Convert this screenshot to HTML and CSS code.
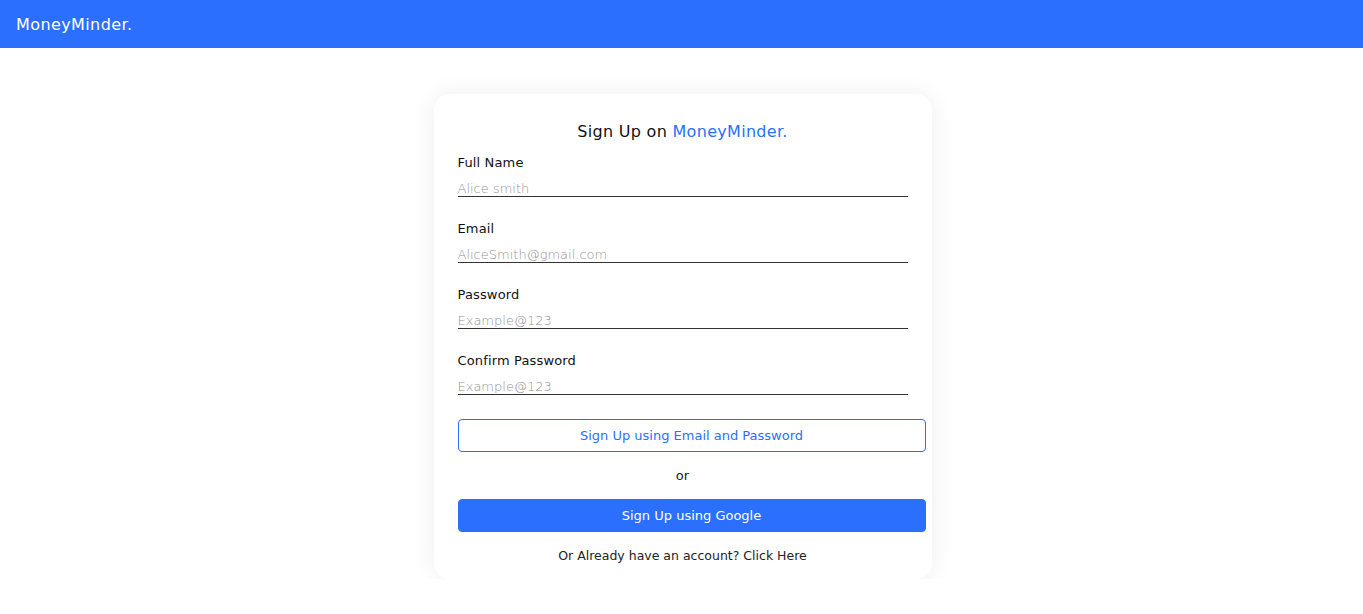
FILE: index.html
```html
<!DOCTYPE html>
<html>
<head>
<meta charset="utf-8">
<link rel="stylesheet" href="styles.css">
</head>
<body>
<header class="navbar"><span class="brand">MoneyMinder.</span></header>
<main class="page">
  <form class="card">
    <h1 class="title">Sign Up on <span class="accent">MoneyMinder.</span></h1>
    <div class="field">
      <label class="label">Full Name</label>
      <input class="input" type="text" placeholder="Alice smith">
    </div>
    <div class="field">
      <label class="label">Email</label>
      <input class="input" type="email" placeholder="AliceSmith@gmail.com">
    </div>
    <div class="field">
      <label class="label">Password</label>
      <input class="input" type="password" placeholder="Example@123">
    </div>
    <div class="field">
      <label class="label">Confirm Password</label>
      <input class="input" type="password" placeholder="Example@123">
    </div>
    <button type="button" class="btn btn-outline">Sign Up using Email and Password</button>
    <p class="or">or</p>
    <button type="button" class="btn btn-solid">Sign Up using Google</button>
    <p class="footer">Or Already have an account? Click Here</p>
  </form>
</main>
</body>
</html>
```
FILE: styles.css
```css
* { box-sizing: border-box; }
html, body { margin: 0; padding: 0; background: #fff; }
body { font-family: "DejaVu Sans", "Open Sans", sans-serif; color: #111; }
.navbar {
  height: 48px;
  background: #2b6fff;
  display: flex;
  align-items: center;
  padding-left: 16px;
}
.brand { color: #fff; font-size: 16px; font-weight: 500; letter-spacing: 0.4px; }
.page { display: flex; justify-content: center; padding-top: 46px; padding-left: 2px; }
.card {
  width: 498px;
  background: #fff;
  border-radius: 16px;
  box-shadow: 0 0 24px rgba(0,0,0,0.07);
  padding: 24px 24px 14px;
  display: flex;
  flex-direction: column;
}
.title { margin: 0 0 8px; font-size: 16px; letter-spacing: 0.3px; font-weight: 400; text-align: center; color: #111; line-height: 28px; }
.accent { color: #2b6fff; }
.field { display: flex; flex-direction: column; margin-bottom: 23px; }
.label { font-size: 13px; letter-spacing: 0.15px; line-height: 18px; margin-bottom: 8px; color: #111; }
.input {
  width: 450px;
  border: none;
  border-bottom: 1px solid #333;
  padding: 0;
  height: 17px;
  font-family: inherit;
  font-size: 13px;
  font-weight: 300;
  outline: none;
  background: transparent;
}
.input::placeholder { color: #939393; }
.btn {
  width: 468px;
  height: 33px;
  border-radius: 4px;
  font-family: inherit;
  font-size: 13px;
  cursor: pointer;
}
.btn-outline { margin-top: 1px; background: #fff; color: #2b6fff; border: 1px solid #2b6fff; }
.btn-solid { background: #2b6fff; color: #fff; border: 1px solid #2b6fff; }
.or { margin: 0; height: 47px; display: flex; align-items: center; justify-content: center; font-size: 13px; color: #222; }
.footer { margin: 15px 0 0; text-align: center; font-size: 12.5px; color: #222; line-height: 18px; }
```
